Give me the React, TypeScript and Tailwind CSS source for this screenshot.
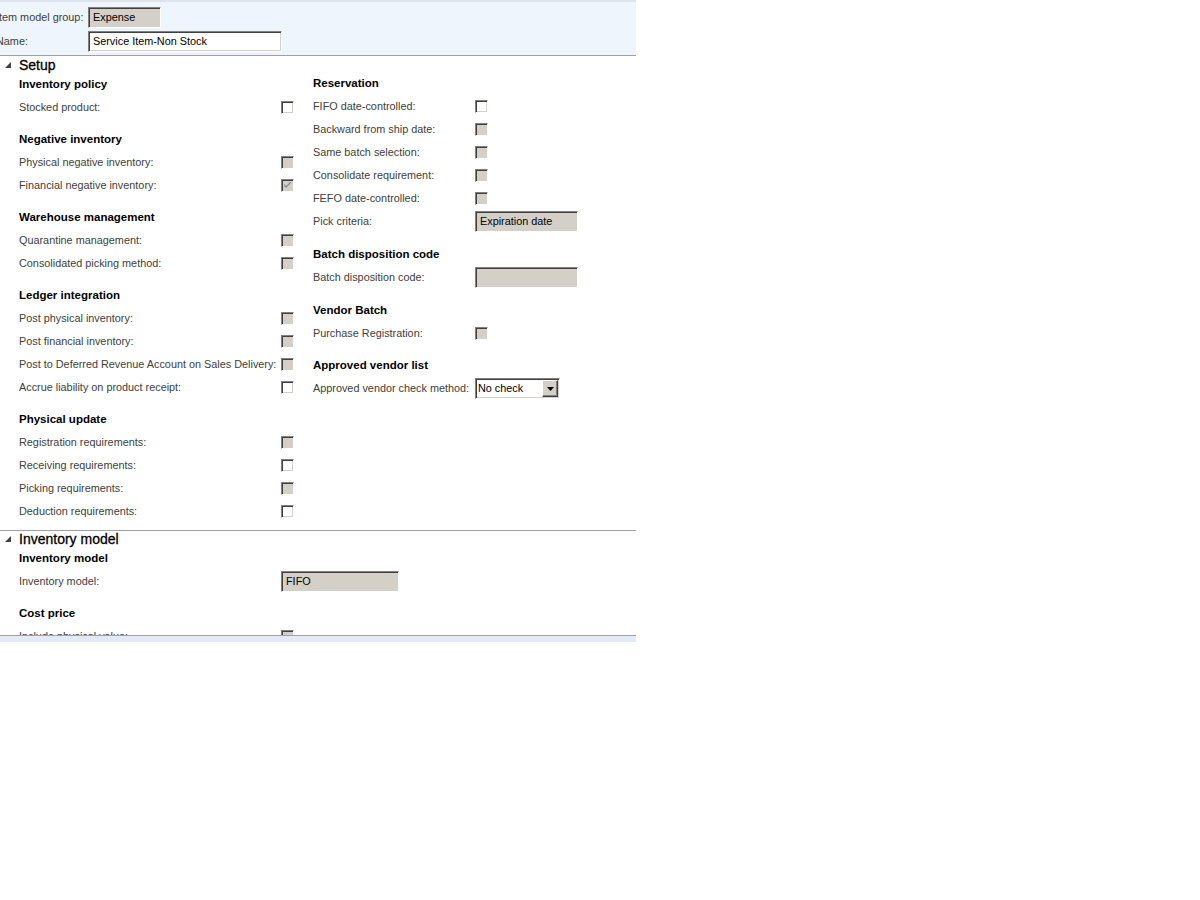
import type { ReactNode } from 'react'

type Row =
  | { kind: 'check'; label: string; disabled?: boolean; checked?: boolean }
  | { kind: 'text'; label: string; value: string; width: string }
  | { kind: 'select'; label: string; value: string }

interface Group {
  title: string
  gap: string
  rows: Row[]
}

const leftGroups: Group[] = [
  { title: 'Inventory policy', gap: 'mt-0', rows: [{ kind: 'check', label: 'Stocked product:' }] },
  {
    title: 'Negative inventory',
    gap: 'mt-[9px]',
    rows: [
      { kind: 'check', label: 'Physical negative inventory:', disabled: true },
      { kind: 'check', label: 'Financial negative inventory:', disabled: true, checked: true },
    ],
  },
  {
    title: 'Warehouse management',
    gap: 'mt-[9px]',
    rows: [
      { kind: 'check', label: 'Quarantine management:', disabled: true },
      { kind: 'check', label: 'Consolidated picking method:', disabled: true },
    ],
  },
  {
    title: 'Ledger integration',
    gap: 'mt-[9px]',
    rows: [
      { kind: 'check', label: 'Post physical inventory:', disabled: true },
      { kind: 'check', label: 'Post financial inventory:', disabled: true },
      { kind: 'check', label: 'Post to Deferred Revenue Account on Sales Delivery:', disabled: true },
      { kind: 'check', label: 'Accrue liability on product receipt:' },
    ],
  },
  {
    title: 'Physical update',
    gap: 'mt-[9px]',
    rows: [
      { kind: 'check', label: 'Registration requirements:', disabled: true },
      { kind: 'check', label: 'Receiving requirements:' },
      { kind: 'check', label: 'Picking requirements:', disabled: true },
      { kind: 'check', label: 'Deduction requirements:' },
    ],
  },
]

const rightGroups: Group[] = [
  {
    title: 'Reservation',
    gap: 'mt-0',
    rows: [
      { kind: 'check', label: 'FIFO date-controlled:' },
      { kind: 'check', label: 'Backward from ship date:', disabled: true },
      { kind: 'check', label: 'Same batch selection:', disabled: true },
      { kind: 'check', label: 'Consolidate requirement:', disabled: true },
      { kind: 'check', label: 'FEFO date-controlled:', disabled: true },
      { kind: 'text', label: 'Pick criteria:', value: 'Expiration date', width: 'w-[103px]' },
    ],
  },
  {
    title: 'Batch disposition code',
    gap: 'mt-[10px]',
    rows: [{ kind: 'text', label: 'Batch disposition code:', value: '', width: 'w-[103px]' }],
  },
  {
    title: 'Vendor Batch',
    gap: 'mt-[10px]',
    rows: [{ kind: 'check', label: 'Purchase Registration:', disabled: true }],
  },
  {
    title: 'Approved vendor list',
    gap: 'mt-[9px]',
    rows: [{ kind: 'select', label: 'Approved vendor check method:', value: 'No check' }],
  },
]

// sunken 3d border used by the old windows controls
const sunken =
  'border border-t-[#808080] border-l-[#808080] border-r-white border-b-white shadow-[inset_1px_1px_0_#404040,inset_-1px_-1px_0_#d4d0c8]'

function CheckBox({ disabled, checked }: { disabled?: boolean; checked?: boolean }) {
  return (
    <div
      className={`w-[13px] h-[13px] shrink-0 flex items-center justify-center ${sunken} ${
        disabled ? 'bg-[#d4d0c8]' : 'bg-white'
      }`}
    >
      {checked && (
        <svg width="7" height="7" viewBox="0 0 7 7">
          <path d="M0 2 L0 4 L2 6 L7 1 L7 -1 L2 4 Z" fill="#8d8d8d" />
        </svg>
      )}
    </div>
  )
}

function TextBox({ value, width, disabled }: { value: string; width: string; disabled?: boolean }) {
  return (
    <div
      className={`h-[21px] ${width} flex items-center pl-[4px] text-black ${sunken} ${
        disabled ? 'bg-[#d4d0c8]' : 'bg-white'
      }`}
    >
      {value}
    </div>
  )
}

function SelectBox({ value }: { value: string }) {
  return (
    <div className={`h-[21px] w-[85px] flex items-center bg-white ${sunken}`}>
      <span className="flex-1 pl-[2px] text-black">{value}</span>
      <div className="w-[16px] h-[17px] mr-[1px] bg-[#d4d0c8] flex items-center justify-center border border-t-white border-l-white border-r-[#404040] border-b-[#404040] shadow-[inset_-1px_-1px_0_#808080]">
        <svg width="7" height="4" viewBox="0 0 7 4">
          <path d="M0 0 H7 L3.5 4 Z" fill="#000" />
        </svg>
      </div>
    </div>
  )
}

function FieldRow({ row, labelWidth }: { row: Row; labelWidth: string }) {
  return (
    <div className="h-[23px] flex items-center">
      <div className={`${labelWidth} shrink-0 text-[#404040] whitespace-nowrap`}>{row.label}</div>
      {row.kind === 'check' && <CheckBox disabled={row.disabled} checked={row.checked} />}
      {row.kind === 'text' && <TextBox value={row.value} width={row.width} disabled />}
      {row.kind === 'select' && <SelectBox value={row.value} />}
    </div>
  )
}

function GroupBlock({ group, labelWidth, headH }: { group: Group; labelWidth: string; headH: string }) {
  return (
    <div className={group.gap}>
      <div className={`${headH} flex items-center font-bold text-[11.5px] text-black`}>{group.title}</div>
      {group.rows.map(row => (
        <FieldRow key={row.label} row={row} labelWidth={labelWidth} />
      ))}
    </div>
  )
}

function SectionHeader({ title }: { title: string }) {
  return (
    <div className="h-[16px] flex items-center">
      <div className="w-[19px] flex items-center pl-[5px]">
        <svg width="6" height="6" viewBox="0 0 6 6">
          <path d="M6 0 L6 6 L0 6 Z" fill="#404040" />
        </svg>
      </div>
      <span className="text-[14px] text-black [-webkit-text-stroke:0.3px_#000] mb-[1px]">{title}</span>
    </div>
  )
}

function HeaderField({ label, children }: { label: string; children: ReactNode }) {
  return (
    <div className="h-[24px] flex items-center">
      <div className="w-[92px] ml-[-4px] text-[#404040] whitespace-nowrap">{label}</div>
      {children}
    </div>
  )
}

export default function App() {
  return (
    <div
      className="w-[636px] text-[10.85px] leading-none bg-white"
      style={{ fontFamily: '"Liberation Sans", Arial, sans-serif' }}
    >
      {/* top fields */}
      <div className="h-[56px] bg-[#eef5fd] border-t-2 border-[#dde4ee] border-b border-b-[#a0a0a0] pt-[3px] overflow-hidden">
        <HeaderField label="Item model group:">
          <TextBox value="Expense" width="w-[73px]" disabled />
        </HeaderField>
        <HeaderField label="Name:">
          <TextBox value="Service Item-Non Stock" width="w-[194px]" />
        </HeaderField>
      </div>

      {/* scrolling form body */}
      <div className="h-[580px] overflow-hidden border-b border-[#a0a0a0]">
        <div className="pt-[1px] border-b border-[#a0a0a0] pb-[7px]">
          <SectionHeader title="Setup" />
          <div className="flex pl-[19px]">
            <div className="w-[275px]">
              {leftGroups.map(g => (
                <GroupBlock key={g.title} group={g} labelWidth="w-[262px]" headH="h-[23px]" />
              ))}
            </div>
            <div className="ml-[19px]">
              {rightGroups.map((g, i) => (
                <GroupBlock
                  key={g.title}
                  group={g}
                  labelWidth="w-[162px]"
                  headH={i === 0 ? 'h-[22px]' : 'h-[23px]'}
                />
              ))}
            </div>
          </div>
        </div>

        <SectionHeader title="Inventory model" />
        <div className="pl-[19px]">
          <div className="h-[23px] flex items-center font-bold text-[11.5px] text-black">Inventory model</div>
          <FieldRow row={{ kind: 'text', label: 'Inventory model:', value: 'FIFO', width: 'w-[118px]' }} labelWidth="w-[262px]" />
          <div className="mt-[9px]">
            <div className="h-[23px] flex items-center font-bold text-[11.5px] text-black">Cost price</div>
            <FieldRow row={{ kind: 'check', label: 'Include physical value:', disabled: true }} labelWidth="w-[262px]" />
          </div>
        </div>
      </div>
      <div className="h-[6px] bg-[#e3eaf7]" />
    </div>
  )
}
